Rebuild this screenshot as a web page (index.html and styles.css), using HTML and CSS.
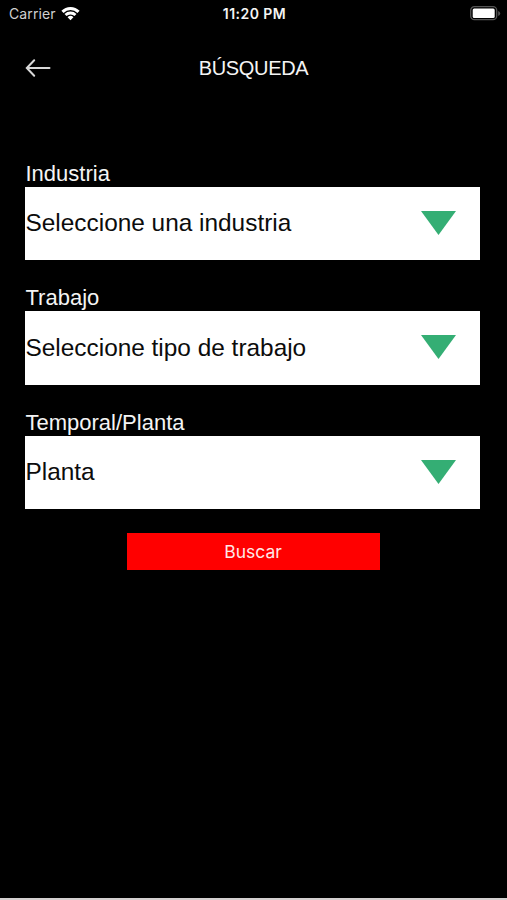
FILE: index.html
```html
<!DOCTYPE html>
<html lang="es">
<head>
<meta charset="utf-8">
<title>Búsqueda</title>
<link rel="stylesheet" href="styles.css">
</head>
<body>
<div class="status">
  <div class="carrier"><span class="carrier-name">Carrier</span>
    <svg class="wifi" viewBox="0 0 20 15"><path d="M10 14.5 6.900 11.500a4.400 4.400 0 0 1 6.200 0zM5.800 10.200 3.700 8a9 9 0 0 1 12.600 0l-2.100 2.200a6.100 6.100 0 0 0-8.400 0zM2.700 6.900.4 4.600a13.500 13.500 0 0 1 19.200 0l-2.300 2.300a10.400 10.400 0 0 0-14.600 0z"/></svg>
  </div>
  <div class="time">11:20 PM</div>
  <div class="power"><svg class="battery" viewBox="0 0 31 15"><rect class="shell" x=".7" y=".7" width="26" height="13" rx="3.700"/><rect class="charge" x="2.700" y="2.500" width="22" height="9.500" rx="1.500"/><path class="shell-cap" d="M28.200 5v5q2-.9 2-2.500t-2-2.500z"/></svg></div>
</div>
<header class="header">
  <svg class="back" viewBox="0 0 26 20"><path d="M24.500 10H2M9.200 2.200 1.800 10l7.400 7.800"/></svg>
  <h1 class="title">BÚSQUEDA</h1>
</header>
<main class="form">
  <div class="field"><label class="label">Industria</label><div class="select"><span class="value">Seleccione una industria</span><svg class="caret" viewBox="0 0 35 24"><path d="M0 0h35L17.500 24z"/></svg></div></div>
  <div class="field"><label class="label">Trabajo</label><div class="select"><span class="value">Seleccione tipo de trabajo</span><svg class="caret" viewBox="0 0 35 24"><path d="M0 0h35L17.500 24z"/></svg></div></div>
  <div class="field"><label class="label">Temporal/Planta</label><div class="select"><span class="value">Planta</span><svg class="caret" viewBox="0 0 35 24"><path d="M0 0h35L17.500 24z"/></svg></div></div>
  <button class="search">Buscar</button>
</main>
</body>
</html>
```
FILE: styles.css
```css
* { box-sizing: border-box; }
body { margin: 0; height: 900px; background: #000; color: #f4f4f4; font-family: "Liberation Sans", Arial, sans-serif; border-bottom: 2px solid #d4d0d0; }
.status { display: grid; grid-template-columns: 1fr auto 1fr; height: 27px; padding: 0 6px 0 9px; align-items: center; font-family: Inter, sans-serif; font-size: 14px; }
.carrier { display: flex; align-items: center; gap: 5px; color: #d0d0d0; }
.carrier-name { letter-spacing: .1px; }
.wifi { width: 19px; height: 15px; margin-top: -1px; fill: #fff; }
.time { font-weight: 600; font-size: 14px; letter-spacing: .45px; margin-right: 1px; }
.power { display: flex; justify-content: flex-end; }
.battery { width: 31px; height: 15px; }
.shell { fill: none; stroke: #555; stroke-width: 1.3; }
.charge { fill: #fff; }
.shell-cap { fill: #555; }
.header { display: grid; grid-template-columns: 26px 1fr 26px; height: 82px; padding: 0 25px; align-items: center; }
.back { width: 26px; height: 20px; fill: none; stroke: #d8d8d8; stroke-width: 2; stroke-linecap: round; }
.title { margin: 0; text-align: center; font-size: 20px; font-weight: 400; line-height: 24px; letter-spacing: -.33px; }
.form { display: flex; flex-direction: column; padding: 52.5px 27px 0 25px; }
.field { height: 124.5px; }
.label { display: block; height: 25px; padding-left: .5px; line-height: 23.5px; font-size: 22px; }
.select { display: flex; align-items: center; justify-content: space-between; height: 73.5px; padding: 0 24px 0 .5px; background: #fff; color: #0c0c0c; }
.value { font-size: 24.4px; }
.caret { width: 35px; height: 24px; margin-top: -1px; fill: #34ae74; }
.search { align-self: center; width: 253px; height: 37px; margin: -2px 0 0 1px; padding: 0; border: 0; background: #f00; color: #ffe8e8; font: 17.5px Inter, sans-serif; }
```
